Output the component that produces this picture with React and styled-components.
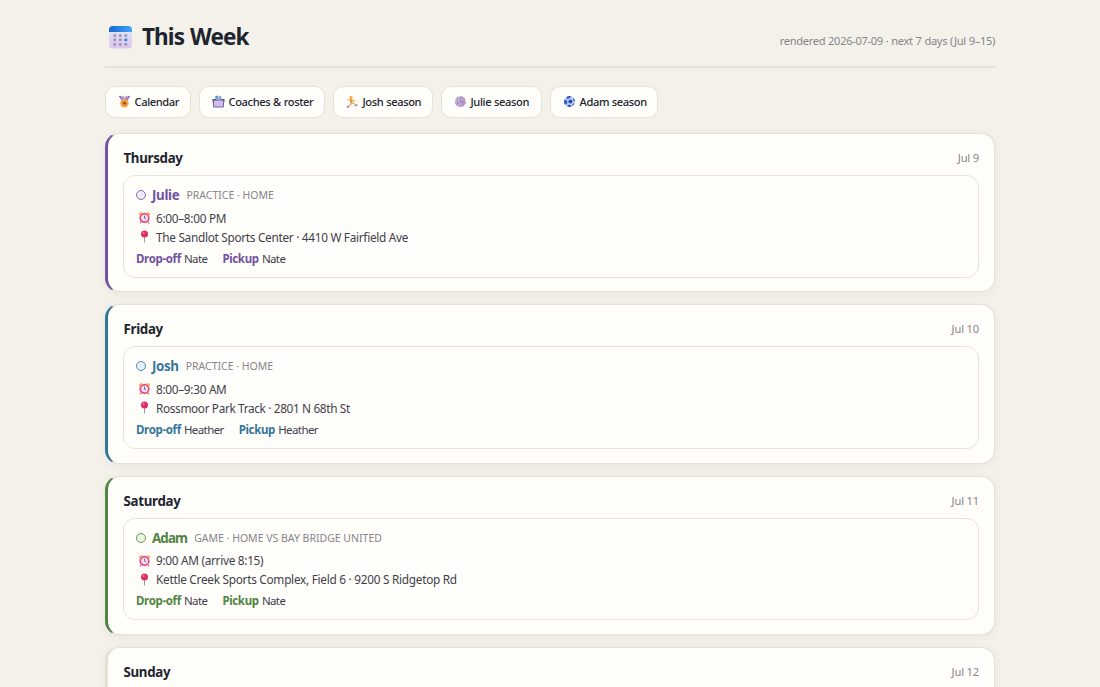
import React from "react";
import styled, { createGlobalStyle } from "styled-components";

const Global = createGlobalStyle`
  * { box-sizing: border-box; }
  html { overflow: hidden; }
  body {
    margin: 0;
    height: 687px;
    overflow: hidden;
    background: #f4f1ea;
    color: #20242e;
    font-family: "Segoe UI", "Noto Sans", "Open Sans", sans-serif;
  }
`;

const Page = styled.main`
  width: 890px;
  height: 687px;
  margin: 0 auto;
  padding-top: 20px;
`;

const Header = styled.header`
  display: flex;
  justify-content: space-between;
  height: 48px;
  border-bottom: 2px solid #e6e1d4;
`;

const Title = styled.h1`
  display: flex;
  align-items: center;
  gap: 9px;
  margin: 0;
  padding-left: 3px;
  height: 34px;
  font-size: 22.5px;
  font-weight: 700;
  line-height: 34px;
  letter-spacing: -0.9px;
  word-spacing: 1px;
  white-space: nowrap;
`;

const Rendered = styled.span`
  padding-top: 12px;
  font-size: 11.1px;
  line-height: 18px;
  letter-spacing: -0.32px;
  word-spacing: 0.3px;
  color: #86858a;
  white-space: nowrap;
`;

const Nav = styled.nav`
  display: flex;
  gap: 8px;
  margin-top: 18px;
`;

const Pill = styled.a`
  display: flex;
  align-items: center;
  gap: 4px;
  width: ${(p) => p.$width}px;
  height: 32px;
  padding: 0 0 1px 11.5px;
  border: 1px solid #e7e2d6;
  border-radius: 10px;
  background: #fffefa;
  font-size: 11.1px;
  font-weight: 500;
  letter-spacing: -0.37px;
  word-spacing: 0.3px;
  white-space: nowrap;
`;

const Days = styled.section`
  display: flex;
  flex-direction: column;
  gap: 12px;
  margin-top: 15px;
`;

const DayCard = styled.article`
  flex: none;
  height: 159.25px;
  padding: 14px 15px 0;
  border: 1px solid #e6e1d5;
  border-left: 3px solid ${(p) => p.$accent || "#e4dfd3"};
  border-radius: 14px;
  background: #fffefa;
  box-shadow: 0 2px 8px rgba(60, 50, 20, 0.06);
`;

const DayHead = styled.div`
  display: flex;
  justify-content: space-between;
  align-items: center;
  height: 20px;
  margin-bottom: 7px;
`;

const DayName = styled.h2`
  margin: 0;
  padding-left: 0.5px;
  font-size: 13.3px;
  font-weight: 700;
  line-height: 20px;
  letter-spacing: -0.3px;
`;

const DayDate = styled.span`
  font-size: 11.1px;
  line-height: 18px;
  letter-spacing: -0.15px;
  color: #86858a;
`;

const Event = styled.div`
  height: 102.5px;
  padding: 9px 12px;
  border: 1px solid #e7e3da;
  border-radius: 12px;
  font-size: 11.8px;
`;

const Who = styled.div`
  display: flex;
  align-items: center;
  height: 20px;
  margin-bottom: 3px;
`;

const Dot = styled.span`
  width: 10px;
  height: 10px;
  margin-right: 6px;
  border: 1px solid ${(p) => p.$color};
  border-radius: 50%;
  background: ${(p) => p.$fill};
  opacity: 0.85;
`;

const Name = styled.strong`
  margin-right: 7px;
  font-size: 13.3px;
  font-weight: 700;
  letter-spacing: ${(p) => p.$tracking}px;
  color: ${(p) => p.$color};
`;

const Kind = styled.span`
  font-size: 10.5px;
  letter-spacing: 0;
  text-transform: uppercase;
  color: #86858a;
`;

const Detail = styled.div`
  display: flex;
  align-items: center;
  gap: 5px;
  height: 19px;
  padding-left: 2px;
  color: #3e414b;
  letter-spacing: ${(p) => p.$tracking || -0.29}px;
  white-space: nowrap;
`;

const Rides = styled.div`
  display: flex;
  gap: 15px;
  height: 19px;
  margin-top: 2.6px;
  font-size: 11.5px;
  line-height: 19px;
  letter-spacing: -0.6px;
  color: #3e414b;

  b {
    margin-right: 0.8px;
    letter-spacing: -0.35px;
    color: ${(p) => p.$color};
  }
`;

const Glyph = styled.svg`
  flex: none;
  display: block;
`;

const CalendarIcon = () => (
  <Glyph width="25" height="25" viewBox="0 0 25 25">
    <defs>
      <linearGradient id="calTop" x1="0" x2="1"><stop stopColor="#1767d0" /><stop offset="1" stopColor="#43a5fb" /></linearGradient>
      <linearGradient id="calBody" x1="0" y1="0" x2="0" y2="1"><stop stopColor="#e3ecfb" /><stop offset="1" stopColor="#dcc4ee" /></linearGradient>
    </defs>
    <rect x="1" y="1" width="23" height="22.5" rx="4" fill="url(#calBody)" />
    <path d="M1 7V5a4 4 0 0 1 4-4h15a4 4 0 0 1 4 4V7Z" fill="url(#calTop)" />
    {[9.2, 13.6, 18].map((y) => [5.3, 10.8, 16.3].map((x) => (
      <rect key={`${x}-${y}`} x={x} y={y} width="3" height="2.7" rx=".8" fill={x > 16 && y === 13.6 ? "#3488e8" : "#a198b4"} />
    )))}
  </Glyph>
);

const MedalIcon = () => (
  <Glyph width="13" height="13" viewBox="0 0 13 13">
    <path d="M1.500 1l3 4M11.500 1l-3 4" stroke="#7a62cc" strokeWidth="1.500" />
    <path d="M3.700 1l2.300 4M9.300 1L7 5" stroke="#e66aa0" strokeWidth="1.100" />
    <path d="M5 1l1.500 3L8 1" fill="none" stroke="#6fa0dc" strokeWidth=".9" />
    <circle cx="6.500" cy="8.300" r="4.200" fill="#f5a54c" />
    <circle cx="6.500" cy="8.300" r="2.300" fill="#d97a30" />
    <circle cx="6.500" cy="8.300" r="1" fill="#7a3d20" />
  </Glyph>
);

const RosterIcon = () => (
  <Glyph width="13" height="13" viewBox="0 0 13 13">
    <path d="M3.300 .8h3v3h-3z" fill="#4d9bd6" />
    <path d="M7 1.200h2.300V4H7z" fill="#7b9fc8" />
    <path d="M.5 4h12v3.300h-12z" fill="#575078" />
    <path d="M1.700 5.500h9.600V12H1.700z" fill="#cdbdf0" />
    <path d="M1.700 12h9.600M1.500 7v5M11.500 7v5" stroke="#746698" strokeWidth="1" />
    <path d="M4.300 3.500h4.500v2H4.300z" fill="#a79bc8" />
  </Glyph>
);

const RunnerIcon = () => (
  <Glyph width="13" height="13" viewBox="0 0 13 13" fill="none" strokeLinecap="round" strokeLinejoin="round">
    <circle cx="5" cy="2.200" r="1.500" fill="#f5b04a" />
    <path d="M5 4.700L5.500 7.300" stroke="#ee8a40" strokeWidth="2.400" />
    <path d="M4.500 4.700L1.800 5M6.500 5l2.500 1" stroke="#f3a84c" strokeWidth="1.200" />
    <path d="M5.300 8l-1.300 2.500L1.800 11.500M6 7.800l2.300 1 1 1.700" stroke="#d9a070" strokeWidth="1.200" />
    <path d="M1.100 12h1.500M9.800 10.600l1.200-.8" stroke="#765a82" strokeWidth="1.100" />
  </Glyph>
);

const VolleyballIcon = () => (
  <Glyph width="13" height="13" viewBox="0 0 13 13" fill="none">
    <defs><linearGradient id="volley" x1="0" y1="0" x2="1" y2="1"><stop stopColor="#d0c8d8" /><stop offset="1" stopColor="#b48fd0" /></linearGradient></defs>
    <circle cx="6.300" cy="6.500" r="5.500" fill="url(#volley)" />
    <path d="M6.500 6.500C5 4 6.500 2 9 1.700M6.500 6.500C9.500 6 11 7.500 11.500 9M6.500 6.500C5 9 3 9.500 1.500 8.500M4 2c-1 2-.8 4-.2 6M11 4c-2-.7-4-.3-5 .5M9.500 11c0-2-1-3.500-2.300-4.300" stroke="#9178aa" strokeWidth=".6" />
  </Glyph>
);

const SoccerIcon = () => (
  <Glyph width="13" height="13" viewBox="0 0 13 13">
    <circle cx="6.500" cy="6.500" r="5.500" fill="#bccbf2" />
    <path d="M6.300 5l2.300-.2 1 1.800-1.400 2-2.200-.5-.8-1.600Z" fill="#2649b8" />
    <path d="M3.500 1.900C5 .9 7 .8 8.300 1.300L6.500 3.200 4 3.900Z" fill="#3458c6" />
    <path d="M1.100 5l2.200-.3 1.300 2.500-1.200 2.200-1.600-.1C.9 7.900.8 6.400 1.100 5Z" fill="#3262cf" />
    <path d="M4.500 10.200l2.700-.4 1.200 1.800c-1.400.5-3 .3-4-.3ZM10.400 3.200c1 .9 1.500 2 1.600 3.500L10.800 6 10 4.500ZM10.400 8.500l1.200-.2-1.600 2.400-.6-.8Z" fill="#2b51c0" />
  </Glyph>
);

const ClockIcon = () => (
  <Glyph width="13" height="13" viewBox="0 0 13 13" fill="none">
    <path d="M1.300 4.500C.3 2.300 2 .5 4.700 1.400ZM11.700 4.500c1-2.200-.7-4-3.400-3.100Z" fill="#f7a444" />
    <path d="M3.200 10.500l-1.200 1.800M9.800 10.500l1.200 1.800" stroke="#c87898" strokeWidth="1.300" />
    <circle cx="6.500" cy="6.900" r="4.300" fill="#f3dff5" stroke="#e44d79" strokeWidth="1.700" />
    <path d="M6.500 4.600v2.500l1.500 1" stroke="#66578b" strokeWidth=".9" />
  </Glyph>
);

const PinIcon = () => (
  <Glyph width="13" height="13" viewBox="0 0 13 13">
    <path d="M6.500 6v6.500" stroke="#9d97a4" strokeWidth="1" />
    <circle cx="6.500" cy="4" r="3.500" fill="#dc2e61" />
    <circle cx="5.500" cy="2.900" r="1.100" fill="#f47893" />
  </Glyph>
);

const links = [
  { label: "Calendar", Icon: MedalIcon, width: 86 },
  { label: "Coaches & roster", Icon: RosterIcon, width: 126 },
  { label: "Josh season", Icon: RunnerIcon, width: 100 },
  { label: "Julie season", Icon: VolleyballIcon, width: 101 },
  { label: "Adam season", Icon: SoccerIcon, width: 108 },
];

const days = [
  { day: "Thursday", date: "Jul 9", who: "Julie", tracking: -0.3, color: "#7252a0", fill: "#eee5fa", kind: "Practice · Home", time: "6:00–8:00 PM", place: "The Sandlot Sports Center · 4410 W Fairfield Ave", driver: "Nate" },
  { day: "Friday", date: "Jul 10", who: "Josh", tracking: -0.35, color: "#34779c", fill: "#deeffa", kind: "Practice · Home", time: "8:00–9:30 AM", place: "Rossmoor Park Track · 2801 N 68th St", placeTracking: -0.35, driver: "Heather" },
  { day: "Saturday", date: "Jul 11", who: "Adam", tracking: -0.85, color: "#4f8443", fill: "#e2f5df", kind: "Game · Home vs Bay Bridge United", time: "9:00 AM (arrive 8:15)", place: "Kettle Creek Sports Complex, Field 6 · 9200 S Ridgetop Rd", placeTracking: -0.27, driver: "Nate" },
  { day: "Sunday", date: "Jul 12" },
];

export default function App() {
  return (
    <>
      <Global />
      <Page>
        <Header>
          <Title><CalendarIcon />This Week</Title>
          <Rendered>rendered 2026-07-09 · next 7 days (Jul 9–15)</Rendered>
        </Header>
        <Nav>
          {links.map(({ label, Icon, width }) => (
            <Pill key={label} $width={width}><Icon />{label}</Pill>
          ))}
        </Nav>
        <Days>
          {days.map((d) => (
            <DayCard key={d.day} $accent={d.color}>
              <DayHead><DayName>{d.day}</DayName><DayDate>{d.date}</DayDate></DayHead>
              {d.who && (
                <Event>
                  <Who>
                    <Dot $color={d.color} $fill={d.fill} />
                    <Name $color={d.color} $tracking={d.tracking}>{d.who}</Name>
                    <Kind>{d.kind}</Kind>
                  </Who>
                  <Detail><ClockIcon />{d.time}</Detail>
                  <Detail $tracking={d.placeTracking}><PinIcon />{d.place}</Detail>
                  <Rides $color={d.color}>
                    <span><b>Drop-off</b> {d.driver}</span>
                    <span><b>Pickup</b> {d.driver}</span>
                  </Rides>
                </Event>
              )}
            </DayCard>
          ))}
        </Days>
      </Page>
    </>
  );
}
